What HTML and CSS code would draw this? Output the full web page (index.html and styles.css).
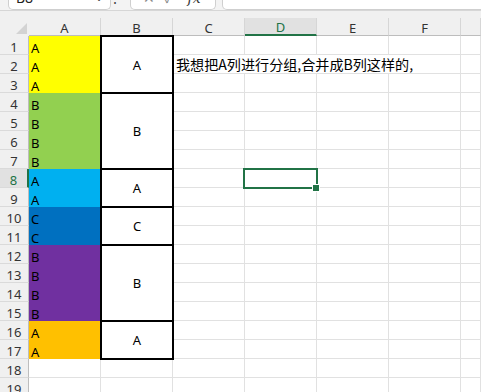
FILE: index.html
```html
<!DOCTYPE html>
<html lang="zh">
<head>
<meta charset="utf-8">
<title>Sheet</title>
<link rel="stylesheet" href="styles.css">
</head>
<body>
<div class="app">
  <div class="fbar">
    <div class="namebox"><span class="nb-text">B8</span><span class="caret">⌄</span></div>
    <div class="dots"><span>⋮</span></div>
    <div class="fxbox"><span class="ic">✕</span><span class="ic">✓</span><span class="ic fx">fx</span></div>
    <div class="finput"></div>
  </div>
  <div class="sheet">
    <div class="corner"><span class="tri"></span></div>
    <div class="hc"><span>A</span></div>
    <div class="hc"><span>B</span></div>
    <div class="hc"><span>C</span></div>
    <div class="hc on"><span>D</span></div>
    <div class="hc"><span>E</span></div>
    <div class="hc"><span>F</span></div>
    <div class="hc"><span></span></div>

    <div class="rh">1</div><div class="c y"><span>A</span></div><div class="c b s3"><span>A</span></div><div class="c"></div><div class="c"></div><div class="c"></div><div class="c"></div><div class="c"></div>
    <div class="rh">2</div><div class="c y"><span>A</span></div><div class="c t"><span>我想把A列进行分组,合并成B列这样的,</span></div><div class="c"></div>
    <div class="rh">3</div><div class="c y"><span>A</span></div><div class="c"></div><div class="c"></div><div class="c"></div><div class="c"></div><div class="c"></div>
    <div class="rh">4</div><div class="c g"><span>B</span></div><div class="c b s4"><span>B</span></div><div class="c"></div><div class="c"></div><div class="c"></div><div class="c"></div><div class="c"></div>
    <div class="rh">5</div><div class="c g"><span>B</span></div><div class="c"></div><div class="c"></div><div class="c"></div><div class="c"></div><div class="c"></div>
    <div class="rh">6</div><div class="c g"><span>B</span></div><div class="c"></div><div class="c"></div><div class="c"></div><div class="c"></div><div class="c"></div>
    <div class="rh">7</div><div class="c g"><span>B</span></div><div class="c"></div><div class="c"></div><div class="c"></div><div class="c"></div><div class="c"></div>
    <div class="rh on">8</div><div class="c lb"><span>A</span></div><div class="c b s2"><span>A</span></div><div class="c"></div><div class="c"></div><div class="c"></div><div class="c"></div><div class="c"></div>
    <div class="rh">9</div><div class="c lb"><span>A</span></div><div class="c"></div><div class="c"></div><div class="c"></div><div class="c"></div><div class="c"></div>
    <div class="rh">10</div><div class="c db"><span>C</span></div><div class="c b s2"><span>C</span></div><div class="c"></div><div class="c"></div><div class="c"></div><div class="c"></div><div class="c"></div>
    <div class="rh">11</div><div class="c db"><span>C</span></div><div class="c"></div><div class="c"></div><div class="c"></div><div class="c"></div><div class="c"></div>
    <div class="rh">12</div><div class="c pu"><span>B</span></div><div class="c b s4"><span>B</span></div><div class="c"></div><div class="c"></div><div class="c"></div><div class="c"></div><div class="c"></div>
    <div class="rh">13</div><div class="c pu"><span>B</span></div><div class="c"></div><div class="c"></div><div class="c"></div><div class="c"></div><div class="c"></div>
    <div class="rh">14</div><div class="c pu"><span>B</span></div><div class="c"></div><div class="c"></div><div class="c"></div><div class="c"></div><div class="c"></div>
    <div class="rh">15</div><div class="c pu"><span>B</span></div><div class="c"></div><div class="c"></div><div class="c"></div><div class="c"></div><div class="c"></div>
    <div class="rh">16</div><div class="c or"><span>A</span></div><div class="c b s2"><span>A</span></div><div class="c"></div><div class="c"></div><div class="c"></div><div class="c"></div><div class="c"></div>
    <div class="rh">17</div><div class="c or"><span>A</span></div><div class="c"></div><div class="c"></div><div class="c"></div><div class="c"></div><div class="c"></div>
    <div class="rh">18</div><div class="c"></div><div class="c"></div><div class="c"></div><div class="c"></div><div class="c"></div><div class="c"></div><div class="c"></div>
    <div class="rh">19</div><div class="c"></div><div class="c"></div><div class="c"></div><div class="c"></div><div class="c"></div><div class="c"></div><div class="c"></div>
  </div>
  <div class="sel"></div>
  <div class="handle"></div>
</div>
</body>
</html>
```
FILE: styles.css
```css
html, body {
  margin: 0;
  padding: 0;
  background: #fff;
}
body {
  width: 481px;
  height: 392px;
  overflow: hidden;
  font-family: "Noto Sans", "Noto Sans CJK SC", sans-serif;
}
.app {
  position: relative;
  width: 481px;
  height: 392px;
  overflow: hidden;
}

/* formula bar (cut off at top) */
.fbar {
  display: flex;
  align-items: flex-start;
  height: 11px;
  box-sizing: border-box;
  background: #f3f3f3;
  border-bottom: 1px solid #d6d6d6;
  overflow: hidden;
}
.namebox, .fxbox, .finput {
  height: 10px;
  box-sizing: border-box;
  background: #fff;
  border: 1px solid #cfcfcf;
  border-top: 0;
  border-radius: 0 0 5px 5px;
  overflow: hidden;
}
.namebox {
  width: 103px;
  margin-left: 8px;
  display: flex;
  justify-content: space-between;
  padding: 0 6px 0 7px;
  font-size: 14px;
  line-height: 14px;
  color: #222;
}
.nb-text, .caret, .ic, .dots span {
  display: block;
  margin-top: -9px;
}
.caret {
  font-size: 12px;
  color: #444;
  margin-top: -10px;
}
.dots {
  width: 19px;
  height: 10px;
  overflow: hidden;
  font-size: 14px;
  line-height: 14px;
  color: #444;
  display: flex;
  justify-content: flex-start;
}
.dots span { margin-left: -3px; }
.fxbox {
  width: 86px;
  display: flex;
  gap: 9px;
  padding-left: 12px;
  font-size: 14px;
  line-height: 14px;
  color: #8a8a8a;
}
.fx {
  color: #333;
  font-style: italic;
  font-family: "DejaVu Serif", serif;
  margin-left: 5px;
}
.finput {
  flex: 1;
  margin-left: 6px;
  margin-right: -10px;
}

/* sheet */
.sheet {
  display: grid;
  grid-template-columns: 29px repeat(6, 72px) 1fr;
  grid-template-rows: 25px;
  grid-auto-rows: 19px;
}
.corner {
  background: #f0f0f0;
  display: flex;
  justify-content: flex-end;
  align-items: flex-end;
  padding: 0 2px 2px 0;
}
.tri {
  width: 0;
  height: 0;
  border-left: 11px solid transparent;
  border-bottom: 11px solid #d3d3d3;
}
.hc {
  background: #f0f0f0;
  display: flex;
  align-items: flex-end;
}
.hc span {
  flex: 1;
  height: 18px;
  box-sizing: border-box;
  border-right: 1px solid #d6d6d6;
  border-bottom: 1px solid #bdbdbd;
  display: flex;
  justify-content: center;
  align-items: flex-end;
  font-size: 13px;
  line-height: 14px;
  color: #333;
}
.hc.on span {
  background: #e1e1e1;
  border-bottom: 2px solid #217346;
  color: #217346;
}
.rh {
  background: #f0f0f0;
  box-sizing: border-box;
  border-right: 1px solid #bdbdbd;
  border-bottom: 1px solid #dadada;
  display: flex;
  justify-content: center;
  align-items: flex-end;
  font-size: 13px;
  line-height: 14px;
  color: #333;
}
.rh.on {
  background: #e1e1e1;
  color: #217346;
  border-right: 2px solid #217346;
}
.c {
  box-sizing: border-box;
  border-right: 1px solid #e1e1e1;
  border-bottom: 1px solid #e1e1e1;
  display: flex;
  align-items: flex-end;
  padding-left: 2px;
  font-size: 13px;
  line-height: 14px;
  color: #000;
  white-space: nowrap;
  min-width: 0;
}
.c > span { margin-bottom: -1px; }

.y  { background: #ffff00; border-color: transparent; }
.g  { background: #92d050; border-color: transparent; }
.lb { background: #00b0f0; border-color: transparent; }
.db { background: #0070c0; border-color: transparent; }
.pu { background: #7030a0; border-color: transparent; }
.or { background: #ffc000; border-color: transparent; }

.b {
  z-index: 1;
  border: 1px solid #000;
  box-shadow: 0 0 0 1px #000;
  background: #fff;
  justify-content: center;
  align-items: center;
  padding: 0;
}
.b > span { margin: 0; }
.s2 { grid-row: span 2; }
.s3 { grid-row: span 3; }
.s4 { grid-row: span 4; }

.t {
  grid-column: span 4;
  padding-left: 3px;
  font-family: "Noto Sans CJK SC", sans-serif;
  font-size: 14.1px;
  line-height: 15px;
}
.t > span { margin-bottom: 1px; }

/* selection */
.sel {
  position: absolute;
  left: 243px;
  top: 168px;
  width: 75px;
  height: 21px;
  box-sizing: border-box;
  border: 2px solid #217346;
}
.handle {
  position: absolute;
  left: 313px;
  top: 185px;
  width: 6px;
  height: 6px;
  background: #217346;
  box-shadow: 0 0 0 1px #fff;
}
```
